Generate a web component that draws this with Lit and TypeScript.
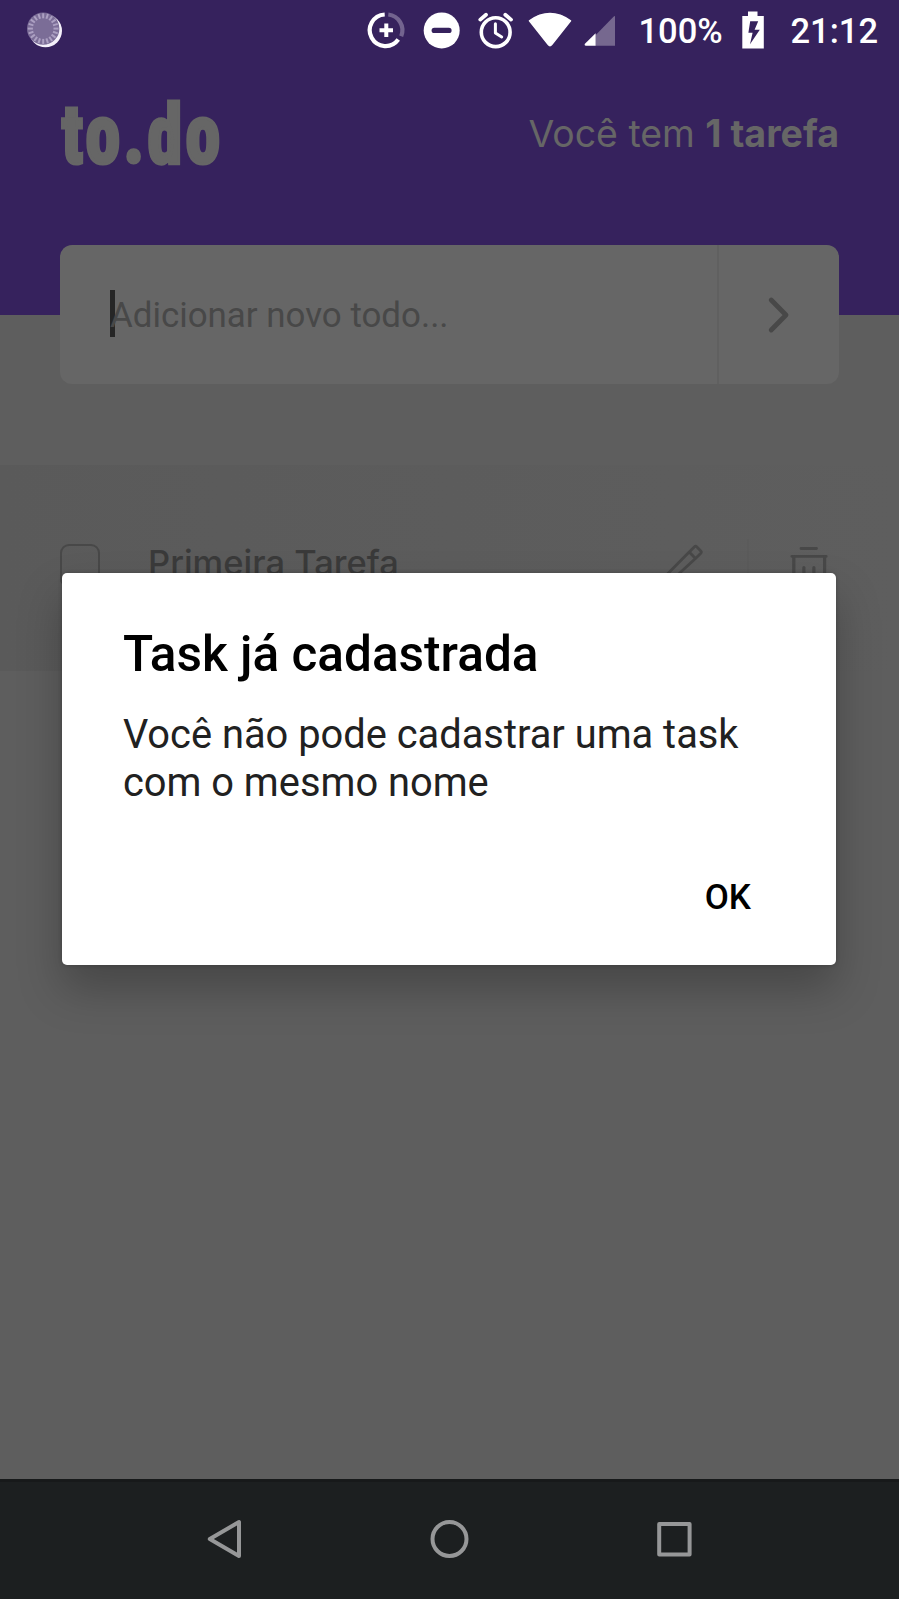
import { LitElement, html, svg, css } from "lit";
import { customElement, property } from "lit/decorators.js";

const ticks = Array.from({ length: 20 }, (_, i) => i * 18);

@customElement("status-bar")
class StatusBar extends LitElement {
  static styles = css`
    :host {
      display: flex;
      align-items: center;
      height: 62px;
      padding: 0 18px 0 26px;
      box-sizing: border-box;
      color: #fff;
      font: 500 34.5px/62px Roboto, sans-serif;
      white-space: nowrap;
    }
    svg { display: block; flex: none; margin-top: -1px; }
    .spacer { flex: 1; }
    .level { width: 84px; margin-left: 20.5px; }
    .battery { margin-left: 19px; }
    .clock { margin-left: 27px; width: 90.5px; }
  `;
  render() {
    return html`
      <svg width="38" height="61" viewBox="0 0 38 61">
        <circle cx="19.5" cy="30.8" r="16.5" fill="#f4f0fa" />
        <circle cx="17.2" cy="28.6" r="16.2" fill="#7b6d97" />
        ${ticks.map((a) => svg`<path d="M17.2 13.3v5" stroke="#aca0c2" stroke-width="2" transform="rotate(${a} 17.2 28.6)" />`)}
      </svg>
      <div class="spacer"></div>
      <svg width="254" height="61" viewBox="364 0 254 61" fill="none">
        <path d="M384.7 14.5A15.8 15.8 0 1 0 398.3 39.6" stroke="#fff" stroke-width="4.2" />
        <path d="M388.3 14.5A15.8 15.8 0 0 1 401.2 36.2" stroke="#73648f" stroke-width="4.2" />
        <path d="M386.3 23.5v13.5M379.5 30.2H393" stroke="#fff" stroke-width="4" />
        <circle cx="441.7" cy="30.4" r="18" fill="#fff" />
        <path d="M434.3 30.4h14.6" stroke="#36225d" stroke-width="5.4" stroke-linecap="round" />
        <circle cx="495.7" cy="32.2" r="14.4" stroke="#fff" stroke-width="3.6" />
        <path d="M495.4 23.8v9.2l6.3 4" stroke="#fff" stroke-width="3" stroke-linecap="round" stroke-linejoin="round" />
        <path d="M480.3 19.6l5.7-4.8M511 19.6l-5.7-4.8" stroke="#fff" stroke-width="3.8" stroke-linecap="round" />
        <path d="M529.5 20.8Q550 6.4 570.5 20.8L551.7 44.6Q550 46.6 548.3 44.6Z" fill="#fff" stroke="#fff" stroke-width="1.6" stroke-linejoin="round" />
        <path d="M615 16v29.8H595.5V35.3L613.5 16.8Q614.3 16 615 16Z" fill="#76688f" />
        <path d="M595.6 33.2V45.8H586Q583.6 45.6 585.2 43.6Z" fill="#fff" />
      </svg>
      <span class="level">100%</span>
      <svg class="battery" width="22" height="61" viewBox="0 0 22 61">
        <path fill="#fff" fill-rule="evenodd" d="M6 11.5h9.5v4.6H21.8V48.6H.3V16.1H6ZM8.2 21.2L6.4 32.7H10.6L8 44.2L17.8 29.7H12.6L16.2 21.2Z" />
      </svg>
      <span class="clock">21:12</span>
    `;
  }
}

@customElement("task-row")
class TaskRow extends LitElement {
  @property() name = "";
  static styles = css`
    :host {
      display: flex;
      align-items: center;
      height: 206px;
      padding: 0 71px 0 60px;
      box-sizing: border-box;
      background: linear-gradient(90deg, #5a5a5a, #5e5e5e);
      font: 500 34.5px/40px Inter, sans-serif;
      color: #3a3a3a;
    }
    .box {
      width: 40px;
      height: 44px;
      border: 2px solid #484848;
      border-radius: 9px;
      box-sizing: border-box;
      margin: 0 48px 4px 0;
    }
    .name { flex: 1; white-space: nowrap; padding-bottom: 10px; }
    .divider { width: 2px; height: 58px; background: #5b5b5b; margin: 0 41px 0 43px; }
    svg { display: block; }
  `;
  render() {
    return html`
      <div class="box"></div>
      <div class="name">${this.name}</div>
      <svg width="42" height="48" viewBox="663 543.5 42 48" fill="none" stroke="#484848" stroke-width="2.8" stroke-linejoin="round">
        <path d="M690.2 551.5l5.3-5.2q1.1-1 2.2 0l4.1 4.2q1 1.1 0 2.2l-5.3 5.3-24.5 22.5-7 1.8 2-7.2Z" />
        <path d="M690.2 551.5l6.8 7" />
      </svg>
      <div class="divider"></div>
      <svg width="38" height="48" viewBox="790.5 543.5 38 48" fill="none" stroke="#484848" stroke-width="2.8" stroke-linecap="round">
        <path d="M801.5 548h15.5M792.3 555.8h34.4" />
        <path d="M794.3 556v27q0 4 4 4h22.8q4 0 4-4v-27" stroke-width="3.2" />
        <path d="M804.4 567v11M814.4 567v11" stroke-width="3.2" />
      </svg>
    `;
  }
}

@customElement("alert-dialog")
class AlertDialog extends LitElement {
  static styles = css`
    :host {
      display: flex;
      flex-direction: column;
      width: 774px;
      height: 392px;
      box-sizing: border-box;
      padding: 52px 60px 0 60.5px;
      border-radius: 5px;
      background: #fff;
      box-shadow: 0 24px 44px rgba(0, 0, 0, 0.25), 0 0 4px rgba(0, 0, 0, 0.22);
      font-family: Roboto, sans-serif;
      white-space: nowrap;
    }
    .title { font-size: 49.5px; line-height: 58px; font-weight: 500; color: #000; }
    .message { margin-top: 28px; font-size: 39.85px; line-height: 47.5px; color: #212121; }
    .ok {
      align-self: flex-end;
      margin: 71px 25.5px 0 0;
      padding: 0;
      border: 0;
      background: none;
      font: 500 35px/42px Roboto, sans-serif;
      color: #000;
    }
  `;
  render() {
    return html`
      <div class="title">Task já cadastrada</div>
      <div class="message">Você não pode cadastrar uma task<br />com o mesmo nome</div>
      <button class="ok">OK</button>
    `;
  }
}

@customElement("app-root")
class AppRoot extends LitElement {
  static styles = css`
    :host {
      display: flex;
      flex-direction: column;
      position: relative;
      width: 899px;
      height: 1599px;
      overflow: hidden;
      background: #5e5e5e;
    }
    .header { height: 315px; background: #36225d; flex: none; }
    .brand {
      display: flex;
      justify-content: space-between;
      align-items: center;
      height: 144px;
      padding: 0 60px;
      color: #666;
    }
    .logo { display: block; overflow: visible; }
    .logo text {
      font: 800 84px "Roboto Condensed", Roboto, sans-serif;
      font-stretch: 75%;
      letter-spacing: 4px;
      fill: #666;
      stroke: #666;
      stroke-width: 3.2px;
    }
    .count { font: 400 37.4px/44px Inter, sans-serif; white-space: nowrap; }
    .count b { font-weight: 700; font-size: 37.6px; }
    .field {
      display: flex;
      align-items: center;
      flex: none;
      height: 139px;
      margin: -70px 60px 0;
      border-radius: 12px;
      background: #666;
      z-index: 0;
    }
    .input {
      display: flex;
      align-items: center;
      flex: 1;
      height: 139px;
      padding-left: 50px;
      border-right: 2px solid #606060;
      font: 400 34.9px/42px Roboto, sans-serif;
      color: #484848;
      white-space: nowrap;
    }
    .placeholder { padding-top: 2px; }
    .caret { width: 5px; height: 47px; margin: -2px -5px 0 0; background: #262626; }
    .add { display: flex; justify-content: center; width: 120px; }
    .list { margin-top: 81px; flex: 1; }
    .nav {
      display: flex;
      align-items: center;
      justify-content: center;
      gap: 186px;
      flex: none;
      height: 120px;
      box-sizing: border-box;
      padding-bottom: 4px;
      border-top: 3px solid #17191a;
      background: #1c1f20;
    }
    .modal { position: absolute; left: 62.4px; top: 573px; }
  `;
  render() {
    return html`
      <div class="header">
        <status-bar></status-bar>
        <div class="brand">
          <svg class="logo" width="160" height="70" viewBox="0 0 160 70">
            <text x="1.5" y="64" textLength="162" lengthAdjust="spacingAndGlyphs">to.do</text>
          </svg>
          <div class="count">Você tem <b>1 tarefa</b></div>
        </div>
      </div>
      <div class="field">
        <div class="input"><div class="caret"></div><span class="placeholder">Adicionar novo todo...</span></div>
        <div class="add">
          <svg width="24" height="38" viewBox="0 0 24 38" fill="none" stroke="#484848" stroke-width="4.8" stroke-linecap="round" stroke-linejoin="round">
            <path d="M4.2 4L19 19L4.2 34" />
          </svg>
        </div>
      </div>
      <div class="list"><task-row name="Primeira Tarefa"></task-row></div>
      <div class="nav">
        <svg width="39" height="42" viewBox="0 0 39 42" fill="none" stroke="#969798" stroke-width="4" stroke-linejoin="round">
          <path d="M34 4V38L4.8 21Z" />
        </svg>
        <svg width="39" height="42" viewBox="0 0 39 42" fill="none" stroke="#969798" stroke-width="4">
          <circle cx="19.5" cy="21" r="17" />
        </svg>
        <svg width="39" height="42" viewBox="0 0 39 42" fill="none" stroke="#969798" stroke-width="4" stroke-linejoin="round">
          <rect x="4.2" y="6" width="30.4" height="30.4" />
        </svg>
      </div>
      <alert-dialog class="modal"></alert-dialog>
    `;
  }
}
